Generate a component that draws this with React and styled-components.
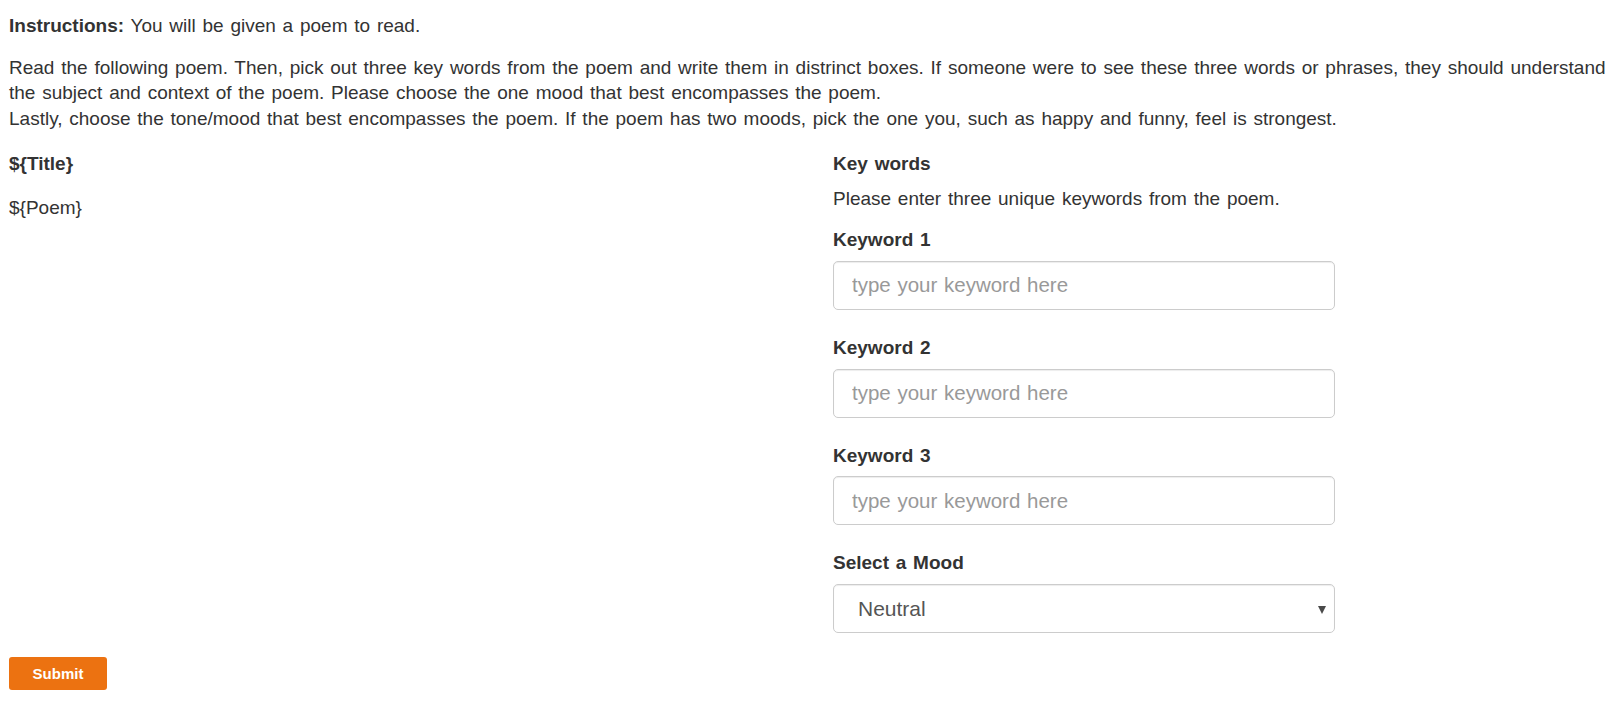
import React from "react";
import styled, { createGlobalStyle } from "styled-components";

const Global = createGlobalStyle`
  html, body { margin: 0; padding: 0; background: #fff; }
  body {
    font-family: "Liberation Sans", Arial, sans-serif;
    font-size: 19px;
    line-height: 25.7px;
    word-spacing: 1.5px;
    color: #333;
  }
  * { box-sizing: border-box; }
`;

const Page = styled.div`
  padding: 13px 9px 20px 9px;
`;

const Para = styled.p`
  margin: 0 0 ${(p) => p.$mb || 0}px 0;
`;

const Strong = styled.strong`
  font-weight: 700;
`;

const Row = styled.div`
  display: grid;
  grid-template-columns: 824px 1fr;
  margin-top: ${(p) => p.$mt || 0}px;
`;

const Column = styled.div`
  display: flex;
  flex-direction: column;
`;

const Heading = styled.div`
  font-weight: 700;
  margin-bottom: ${(p) => p.$mb || 0}px;
`;

const Text = styled.div`
  margin-bottom: ${(p) => p.$mb || 0}px;
`;

const Field = styled.div`
  display: flex;
  flex-direction: column;
  gap: 8px;
  width: 502px;
  margin-bottom: ${(p) => p.$mb || 0}px;
`;

const Label = styled.label`
  font-weight: 700;
`;

const Input = styled.input`
  height: 49px;
  width: 100%;
  padding: 0 18px;
  border: 1px solid #ccc;
  border-radius: 5px;
  box-shadow: inset 0 1px 1px rgba(0, 0, 0, 0.075);
  font-family: "Liberation Sans", Arial, sans-serif;
  font-size: 20.5px;
  word-spacing: 1px;
  color: #555;
  background: #fff;
  outline: none;
  &::placeholder { color: #999; }
`;

const SelectWrap = styled.div`
  position: relative;
  width: 100%;
  &::after {
    content: "";
    position: absolute;
    right: 9px;
    top: 50%;
    margin-top: -3px;
    border-left: 4px solid transparent;
    border-right: 4px solid transparent;
    border-top: 8px solid #4a4a4a;
    pointer-events: none;
  }
`;

const Select = styled.select`
  appearance: none;
  -webkit-appearance: none;
  height: 49px;
  width: 100%;
  padding: 0 24px;
  border: 1px solid #ccc;
  border-radius: 5px;
  box-shadow: inset 0 1px 1px rgba(0, 0, 0, 0.075);
  font-family: "Liberation Sans", Arial, sans-serif;
  font-size: 21px;
  color: #555;
  background: #fff;
  outline: none;
`;

const Submit = styled.button`
  margin-top: 24px;
  width: 98px;
  height: 33px;
  background: #ec7211;
  color: #fff;
  border: none;
  border-radius: 3px;
  font-family: "Liberation Sans", Arial, sans-serif;
  font-weight: 700;
  font-size: 15px;
  word-spacing: 0;
  cursor: pointer;
`;

function KeywordField({ n }) {
  return (
    <Field $mb={25}>
      <Label>Keyword {n}</Label>
      <Input placeholder="type your keyword here" />
    </Field>
  );
}

export default function App() {
  return (
    <>
      <Global />
      <Page>
        <Para $mb={16}>
          <Strong>Instructions:</Strong> You will be given a poem to read.
        </Para>
        <Para>
          Read the following poem. Then, pick out three key words from the poem and write them in distrinct boxes. If someone were to see these three words or phrases, they should understand the subject and context of the poem. Please choose the one mood that best encompasses the poem.
          <br />
          Lastly, choose the tone/mood that best encompasses the poem. If the poem has two moods, pick the one you, such as happy and funny, feel is strongest.
        </Para>
        <Row $mt={19}>
          <Column>
            <Heading $mb={18}>{"${Title}"}</Heading>
            <Text>{"${Poem}"}</Text>
          </Column>
          <Column>
            <Heading $mb={9}>Key words</Heading>
            <Text $mb={16}>Please enter three unique keywords from the poem.</Text>
            <KeywordField n={1} />
            <KeywordField n={2} />
            <KeywordField n={3} />
            <Field>
              <Label>Select a Mood</Label>
              <SelectWrap>
                <Select defaultValue="Neutral">
                  <option>Happy</option>
                  <option>Sad</option>
                  <option>Neutral</option>
                  <option>Angry</option>
                  <option>Funny</option>
                </Select>
              </SelectWrap>
            </Field>
          </Column>
        </Row>
        <Submit type="button">Submit</Submit>
      </Page>
    </>
  );
}
